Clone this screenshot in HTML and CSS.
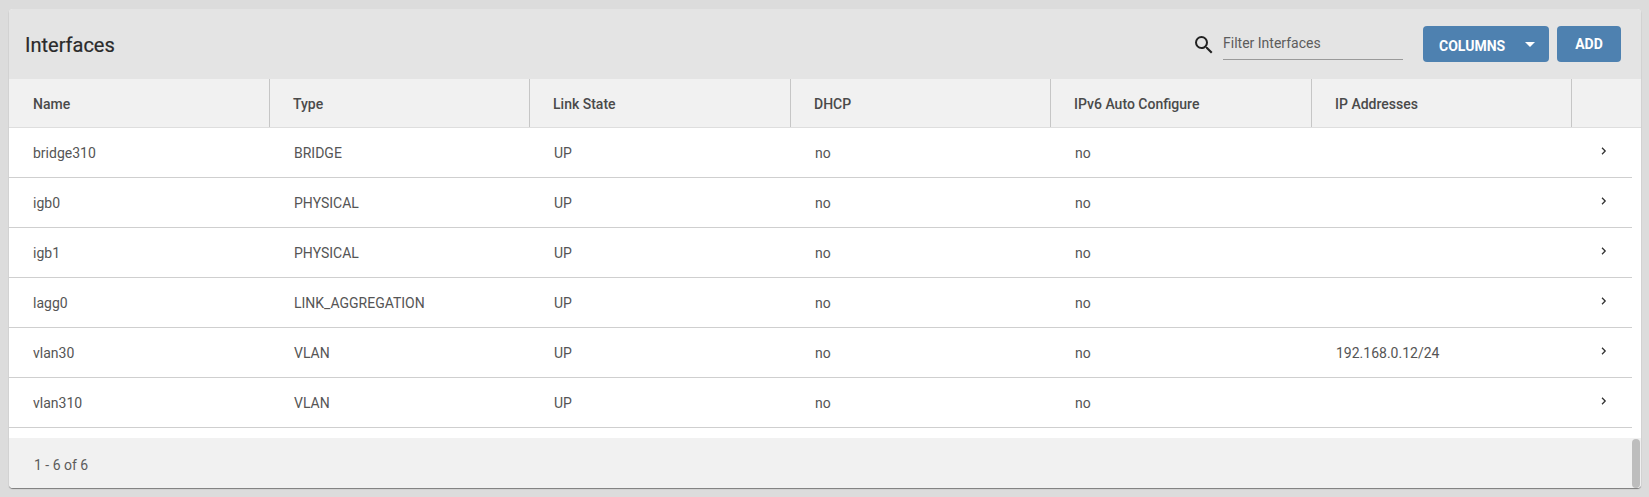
FILE: index.html
```html
<!DOCTYPE html>
<html lang="en">
<head>
<meta charset="utf-8">
<title>Interfaces</title>
<link rel="stylesheet" href="styles.css">
</head>
<body>
<section class="card">
  <header class="toolbar">
    <h1 class="title">Interfaces</h1>
    <div class="filter">
      <svg class="search-icon" viewBox="0 0 24 24" width="24" height="24"><path d="M15.5 14h-.79l-.28-.27A6.47 6.47 0 0 0 16 9.5 6.5 6.5 0 1 0 9.5 16c1.61 0 3.09-.59 4.23-1.57l.27.28v.79l5 4.99L20.49 19l-4.99-5zm-6 0C7.01 14 5 11.99 5 9.5S7.01 5 9.5 5 14 7.01 14 9.5 11.99 14 9.5 14z"/></svg>
      <span class="filter-field">Filter Interfaces</span>
    </div>
    <button class="btn btn-columns"><span>COLUMNS</span><i class="caret"></i></button>
    <button class="btn btn-add">ADD</button>
  </header>
  <div class="row head">
    <div class="cell">Name</div><div class="cell">Type</div><div class="cell">Link State</div><div class="cell">DHCP</div><div class="cell">IPv6 Auto Configure</div><div class="cell">IP Addresses</div><div class="cell"></div>
  </div>
  <div class="body">
    <div class="row item"><div class="cell">bridge310</div><div class="cell">BRIDGE</div><div class="cell">UP</div><div class="cell">no</div><div class="cell">no</div><div class="cell"></div><div class="cell chev"><svg viewBox="0 0 6 8" width="6" height="8"><path d="M1 .8 4.2 4 1 7.2" fill="none" stroke="#333" stroke-width="1.3"/></svg></div></div>
    <div class="row item"><div class="cell">igb0</div><div class="cell">PHYSICAL</div><div class="cell">UP</div><div class="cell">no</div><div class="cell">no</div><div class="cell"></div><div class="cell chev"><svg viewBox="0 0 6 8" width="6" height="8"><path d="M1 .8 4.2 4 1 7.2" fill="none" stroke="#333" stroke-width="1.3"/></svg></div></div>
    <div class="row item"><div class="cell">igb1</div><div class="cell">PHYSICAL</div><div class="cell">UP</div><div class="cell">no</div><div class="cell">no</div><div class="cell"></div><div class="cell chev"><svg viewBox="0 0 6 8" width="6" height="8"><path d="M1 .8 4.2 4 1 7.2" fill="none" stroke="#333" stroke-width="1.3"/></svg></div></div>
    <div class="row item"><div class="cell">lagg0</div><div class="cell">LINK_AGGREGATION</div><div class="cell">UP</div><div class="cell">no</div><div class="cell">no</div><div class="cell"></div><div class="cell chev"><svg viewBox="0 0 6 8" width="6" height="8"><path d="M1 .8 4.2 4 1 7.2" fill="none" stroke="#333" stroke-width="1.3"/></svg></div></div>
    <div class="row item"><div class="cell">vlan30</div><div class="cell">VLAN</div><div class="cell">UP</div><div class="cell">no</div><div class="cell">no</div><div class="cell">192.168.0.12/24</div><div class="cell chev"><svg viewBox="0 0 6 8" width="6" height="8"><path d="M1 .8 4.2 4 1 7.2" fill="none" stroke="#333" stroke-width="1.3"/></svg></div></div>
    <div class="row item"><div class="cell">vlan310</div><div class="cell">VLAN</div><div class="cell">UP</div><div class="cell">no</div><div class="cell">no</div><div class="cell"></div><div class="cell chev"><svg viewBox="0 0 6 8" width="6" height="8"><path d="M1 .8 4.2 4 1 7.2" fill="none" stroke="#333" stroke-width="1.3"/></svg></div></div>
  </div>
  <footer class="footer"><span>1 - 6 of 6</span><i class="thumb"></i></footer>
</section>
</body>
</html>
```

FILE: styles.css
```css
* { box-sizing: border-box; }
html, body { height: 100%; }
body {
  margin: 0;
  padding: 9px 8px 9px 9px;
  background: #dcdcdc;
  font-family: Roboto, "Liberation Sans", sans-serif;
  color: #444;
  overflow: hidden;
}
.card {
  height: 479px;
  display: flex;
  flex-direction: column;
  background: #fff;
  border-radius: 4px;
  overflow: hidden;
  box-shadow: 0 1px 1px rgba(0,0,0,.45);
}
.toolbar {
  height: 70px;
  flex: none;
  display: flex;
  align-items: center;
  padding: 0 20px 0 16px;
  background: #e4e4e4;
}
.title {
  margin: 1px auto 0 0;
  font-size: 20px;
  font-weight: 400;
  color: #2a2a2a;
  -webkit-text-stroke: .2px #2a2a2a;
}
.filter { display: flex; align-items: center; margin-right: 20px; }
.search-icon { fill: #222; margin-right: 7px; margin-top: 1px; }
.filter-field {
  width: 180px;
  height: 30px;
  line-height: 27px;
  font-size: 14px;
  color: #5c5c5c;
  border-bottom: 1px solid #9a9a9a;
  margin-top: 2px;
}
.btn {
  height: 36px;
  border: 0;
  border-radius: 4px;
  background: #4e81b0;
  color: #fff;
  font: 700 14px Roboto, "Liberation Sans", sans-serif;
  padding: 0;
}
.btn-columns {
  width: 126px;
  display: flex;
  align-items: center;
  padding: 3px 0 0 16px;
  margin-right: 8px;
}
.caret {
  width: 0;
  height: 0;
  margin: -3px 0 0 20px;
  border: 5.5px solid transparent;
  border-top-color: #fff;
  border-bottom: 0;
}
.btn-add { width: 64px; padding-bottom: 1px; }
.row {
  display: grid;
  grid-template-columns: 261px 260px 261px 260px 261px 260px 1fr;
  flex: none;
}
.head {
  height: 49px;
  background: #f1f1f1;
  border-bottom: 1px solid #dedede;
  font-size: 14px;
  font-weight: 500;
  color: #4a4a4a;
}
.head .cell {
  display: flex;
  align-items: center;
  padding: 1px 0 0 23px;
  border-right: 1px solid #c6c6c6;
}
.head .cell:first-child { padding-left: 24px; }
.head .cell:last-child { border-right: 0; }
.body { flex: 1; padding-right: 9px; }
.item {
  height: 50px;
  border-bottom: 1px solid #cfcfcf;
  font-size: 14px;
  color: #555;
}
.item .cell {
  display: flex;
  align-items: center;
  padding-left: 24px;
  padding-top: 1px;
}
.item .chev { padding: 0 0 4px 29px; }
.footer {
  height: 50px;
  flex: none;
  position: relative;
  display: flex;
  align-items: center;
  padding: 3px 0 0 25px;
  background: #f1f1f1;
  font-size: 14px;
  color: #5c5c5c;
}
.thumb {
  position: absolute;
  right: 1px;
  top: 1px;
  bottom: 0;
  width: 8px;
  border-radius: 4px;
  background: #bdbdbd;
}
```
